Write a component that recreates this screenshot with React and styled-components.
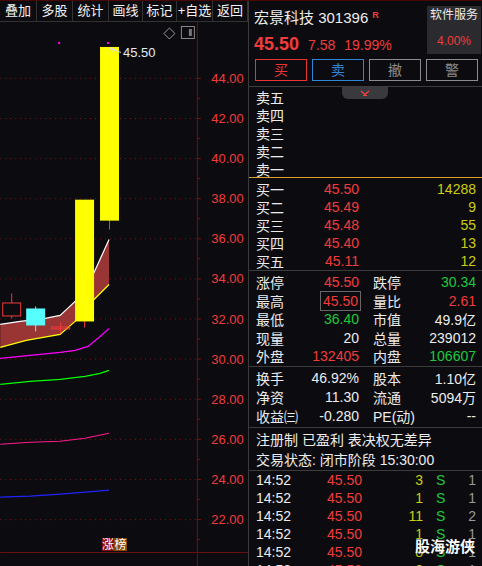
import React from "react";
import styled, { createGlobalStyle } from "styled-components";

const RED = "#f23b3b";
const GREEN = "#1ec83c";
const YELLOW = "#cccc10";
const GRID = "#7a1414";

const GlobalStyle = createGlobalStyle`
  html, body {
    margin: 0;
    padding: 0;
    background: #0c0c10;
  }
  body {
    font-family: "Liberation Sans", "Noto Sans CJK SC", sans-serif;
  }
`;

const Screen = styled.div`
  width: 482px;
  height: 566px;
  overflow: hidden;
  box-sizing: border-box;
  border-top: 1px solid #4a0606;
  display: grid;
  grid-template-columns: 248px 1px 233px;
  background: #0c0c10;
  color: #ececec;
`;

const ChartColumn = styled.div`
  display: flex;
  flex-direction: column;
  min-height: 0;
`;

const Toolbar = styled.div`
  display: flex;
  height: 20px;
  border-bottom: 1px solid #333;
`;

const ToolButton = styled.div`
  width: ${(p) => p.$w}px;
  box-sizing: border-box;
  border-right: 1px solid #333;
  font-size: 13px;
  line-height: 20px;
  text-align: center;
  white-space: nowrap;
  color: #f2f2f2;
`;

const Chart = styled.svg`
  display: block;
  flex: 1;
`;

const Divider = styled.div`
  background: #3a3a3a;
`;

const Panel = styled.div`
  position: relative;
  display: flex;
  flex-direction: column;
  font-size: 14px;
  min-height: 0;
`;

const Header = styled.div`
  display: flex;
  height: 55px;
  padding-left: 5px;
`;

const TitleBlock = styled.div`
  display: flex;
  flex-direction: column;
  padding-top: 5px;
`;

const Title = styled.div`
  font-size: 15px;
  line-height: 18px;
  white-space: nowrap;
  sup {
    color: ${RED};
    font-size: 9px;
    font-weight: bold;
    margin-left: 4px;
    vertical-align: 5px;
  }
`;

const PriceLine = styled.div`
  display: flex;
  align-items: baseline;
  gap: 9px;
  margin-top: 6px;
  line-height: 22px;
  color: ${RED};
`;

const BigPrice = styled.span`
  font-size: 18px;
  font-weight: bold;
`;

const SectorBox = styled.div`
  margin: 5px 1px 0 auto;
  width: 54px;
  height: 48px;
  box-sizing: border-box;
  padding: 2px 0 6px;
  background: #2b2b2f;
  display: flex;
  flex-direction: column;
  justify-content: space-between;
  align-items: center;
  font-size: 12px;
  line-height: 14px;
  span:last-child {
    color: ${RED};
  }
`;

const ButtonRow = styled.div`
  display: flex;
  gap: 5px;
  padding: 3px 0 5px 6px;
  border-bottom: 1px solid #3c3c3c;
`;

const TradeButton = styled.div`
  width: 52px;
  height: 22px;
  box-sizing: border-box;
  border: 1px solid ${(p) => p.$color};
  color: ${(p) => p.$color};
  text-align: center;
  line-height: 20px;
  font-size: 14px;
`;

const Book = styled.div`
  position: relative;
  display: flex;
  flex-direction: column;
  padding: ${(p) => p.$pad || "0"};
  border-bottom: 1px solid ${(p) => p.$line || "#3c3c3c"};
`;

const Tab = styled.div`
  position: absolute;
  top: 0;
  left: 93px;
  width: 46px;
  height: 12px;
  background: #3a3a3e;
  border-radius: 0 0 6px 6px;
  display: flex;
  justify-content: center;
  align-items: center;
`;

const Row = styled.div`
  display: grid;
  grid-template-columns: 103px 103px;
  column-gap: 14px;
  padding-left: 7px;
  height: ${(p) => p.$h || 18}px;
  align-items: center;
  white-space: nowrap;
`;

const Half = styled.div`
  display: flex;
  justify-content: space-between;
  align-items: center;
`;

const Value = styled.span`
  color: ${(p) => p.$color || "#ececec"};
  ${(p) => (p.$boxed ? "outline: 1px solid #666; outline-offset: 1px; padding: 0 1px;" : "")}
`;

const RightValue = styled(Value)`
  margin-left: auto;
`;

const Line = styled.div`
  padding-left: 7px;
  height: ${(p) => p.$h}px;
  line-height: ${(p) => p.$h}px;
  white-space: nowrap;
`;

const TradeRow = styled.div`
  display: grid;
  grid-template-columns: 66px 40px 61px 13px 20px 20px;
  padding-left: 7px;
  height: 18px;
  align-items: center;
  flex-shrink: 0;
`;

const Cell = styled.span`
  color: ${(p) => p.$color};
  text-align: ${(p) => p.$align || "left"};
`;

const Watermark = styled.div`
  position: absolute;
  left: 166px;
  top: 537px;
  font-size: 15px;
  line-height: 18px;
  font-weight: bold;
  color: #ffffff;
  text-shadow: 0 0 2px #000;
`;

const tools = [
  ["叠加", 37],
  ["多股", 36],
  ["统计", 36],
  ["画线", 34],
  ["标记", 34],
  ["+自选", 36],
  ["返回", 35],
];

const axis = ["44.00", "42.00", "40.00", "38.00", "36.00", "34.00", "32.00", "30.00", "28.00", "26.00", "24.00", "22.00"];
const gy = (i) => 77 + i * 40.18;

const buys = [
  ["买一", "45.50", "14288"],
  ["买二", "45.49", "9"],
  ["买三", "45.48", "55"],
  ["买四", "45.40", "13"],
  ["买五", "45.11", "12"],
];

const stats = [
  ["涨停", "45.50", RED, "跌停", "30.34", GREEN],
  ["最高", "45.50", RED, "量比", "2.61", RED, true],
  ["最低", "36.40", GREEN, "市值", "49.9亿"],
  ["现量", "20", null, "总量", "239012"],
  ["外盘", "132405", RED, "内盘", "106607", GREEN],
];

const stats2 = [
  ["换手", "46.92%", "股本", "1.10亿"],
  ["净资", "11.30", "流通", "5094万"],
  ["收益㈢", "-0.280", "PE(动)", "--"],
];

const trades = [
  ["3", "1"],
  ["1", "1"],
  ["11", "2"],
  ["1", "1"],
  ["8", "1"],
  ["2", "1"],
];

function KChart() {
  return (
    <Chart width="248" height="545" viewBox="0 21 248 545">
      {axis.map((label, i) => (
        <g key={label}>
          <line x1="0" x2="196" y1={gy(i) + 0.5} y2={gy(i) + 0.5} stroke={GRID} strokeDasharray="1 4" />
          <line x1="197" x2="201" y1={gy(i) + 0.5} y2={gy(i) + 0.5} stroke={GRID} />
          <line x1="197" x2="200" y1={gy(i) + 20.5} y2={gy(i) + 20.5} stroke={GRID} />
          <text x="244" y={gy(i) + 5} fill={RED} fontSize="13" textAnchor="end" fontFamily="Liberation Sans, sans-serif">
            {label}
          </text>
        </g>
      ))}
      <line x1="0" x2="200" y1="57.5" y2="57.5" stroke="none" />
      <line x1="197.5" x2="197.5" y1="21" y2="566" stroke="#6b1010" />
      <line x1="0" x2="248" y1="552.5" y2="552.5" stroke="#6b1010" />

      <polygon
        points="0,324 20,321 45,318 60,315 75,301 94,272 109,239 109,284 94,299 75,321 60,334 26,340 0,347"
        fill="#9a3535"
      />
      <polyline points="0,324 20,321 45,318 60,315 75,301 94,272 109,239" fill="none" stroke="#ffffff" strokeWidth="1.2" />
      <polyline points="0,347 26,340 60,334 75,321 94,299 109,284" fill="none" stroke="#ffff00" strokeWidth="1.2" />

      <polyline points="0,358 30,355 60,352 75,350 88,346 100,336 109,328" fill="none" stroke="#ff00ff" strokeWidth="1.2" />
      <polyline points="0,384 30,381 60,379 85,376 100,373 109,370" fill="none" stroke="#00ff00" strokeWidth="1.2" />
      <polyline points="0,444 30,442 60,441 85,438 109,433" fill="none" stroke="#ff1a8c" strokeWidth="1.2" />
      <polyline points="0,497 30,496 60,494 85,492 109,490" fill="none" stroke="#2222ff" strokeWidth="1.2" />

      <line x1="11.5" x2="11.5" y1="293" y2="318" stroke={RED} />
      <rect x="2.5" y="302.5" width="18" height="13" fill="#0c0c10" stroke={RED} />
      <line x1="35.5" x2="35.5" y1="306" y2="331" stroke="#55ffff" />
      <rect x="26" y="308" width="19" height="17" fill="#55ffff" />
      <line x1="60.5" x2="60.5" y1="322" y2="333" stroke={RED} />
      <rect x="51.5" y="326.5" width="18" height="2" fill="none" stroke={RED} />
      <line x1="84.5" x2="84.5" y1="318" y2="327" stroke={RED} />
      <rect x="75" y="199" width="19" height="122" fill="#ffff00" />
      <line x1="109.5" x2="109.5" y1="218" y2="229" stroke={RED} />
      <rect x="100" y="46" width="19" height="174" fill="#ffff00" />

      <rect x="58" y="41" width="2" height="2" fill="#ff00ff" />
      <rect x="107" y="41" width="2" height="2" fill="#ff00ff" />
      <path d="M110,47 L115,48.5 M110,47 L112.5,51 M111,48 L121,51.5" stroke="#dddddd" fill="none" />
      <text x="123" y="56.5" fill="#e4ecf4" fontSize="13" fontFamily="Liberation Sans, sans-serif">
        45.50
      </text>

      <polygon points="169.5,27 175,32.5 169.5,38 164,32.5" fill="none" stroke="#999" />
      <rect x="181.5" y="25.5" width="13" height="12" fill="none" stroke="#888" />
      <rect x="189" y="28" width="3" height="7" fill="#777" />

      <rect x="102" y="538" width="12" height="13" fill="#8a0c0c" />
      <rect x="114" y="538" width="13" height="13" fill="#8a4800" />
      <text x="102" y="549" fill="#ffffff" fontSize="12" fontFamily="Noto Sans CJK SC, sans-serif">
        涨
      </text>
      <text x="114.5" y="549" fill="#ffffff" fontSize="12" fontFamily="Noto Sans CJK SC, sans-serif">
        榜
      </text>
    </Chart>
  );
}

export default function App() {
  return (
    <>
      <GlobalStyle />
      <Screen>
        <ChartColumn>
          <Toolbar>
            {tools.map(([t, w]) => (
              <ToolButton key={t} $w={w}>
                {t}
              </ToolButton>
            ))}
          </Toolbar>
          <KChart />
        </ChartColumn>
        <Divider />
        <Panel>
          <Header>
            <TitleBlock>
              <Title>
                宏景科技 301396<sup>R</sup>
              </Title>
              <PriceLine>
                <BigPrice>45.50</BigPrice>
                <span>7.58</span>
                <span>19.99%</span>
              </PriceLine>
            </TitleBlock>
            <SectorBox>
              <span>软件服务</span>
              <span>4.00%</span>
            </SectorBox>
          </Header>

          <ButtonRow>
            <TradeButton $color="#e83434">买</TradeButton>
            <TradeButton $color="#2f86d6">卖</TradeButton>
            <TradeButton $color="#8c8c8c">撤</TradeButton>
            <TradeButton $color="#8c8c8c">警</TradeButton>
          </ButtonRow>

          <Book $line="#e0a030">
            <Tab>
              <svg width="10" height="7" viewBox="0 0 10 7">
                <path d="M1,1 L5,4.5 L9,1 M3,5.5 L7,5.5" stroke="#ff4040" fill="none" strokeWidth="1.2" />
              </svg>
            </Tab>
            {["卖五", "卖四", "卖三", "卖二", "卖一"].map((t) => (
              <Row key={t}>
                <Half>
                  <span>{t}</span>
                </Half>
              </Row>
            ))}
          </Book>

          <Book $pad="1px 0">
            {buys.map(([t, p, v]) => (
              <Row key={t}>
                <Half>
                  <span>{t}</span>
                  <Value $color={RED}>{p}</Value>
                </Half>
                <Half>
                  <RightValue $color={YELLOW}>{v}</RightValue>
                </Half>
              </Row>
            ))}
          </Book>

          <Book $pad="1px 0">
            {stats.map(([a, av, ac, b, bv, bc, boxed]) => (
              <Row key={a} $h={18.6}>
                <Half>
                  <span>{a}</span>
                  <Value $color={ac} $boxed={boxed}>
                    {av}
                  </Value>
                </Half>
                <Half>
                  <span>{b}</span>
                  <Value $color={bc}>{bv}</Value>
                </Half>
              </Row>
            ))}
          </Book>

          <Book $pad="1px 0 2px">
            {stats2.map(([a, av, b, bv]) => (
              <Row key={a} $h={19}>
                <Half>
                  <span>{a}</span>
                  <Value>{av}</Value>
                </Half>
                <Half>
                  <span>{b}</span>
                  <Value>{bv}</Value>
                </Half>
              </Row>
            ))}
          </Book>

          <Book $pad="3px 0 0">
            <Line $h={19}>注册制 已盈利 表决权无差异</Line>
            <Line $h={20}>交易状态: 闭市阶段 15:30:00</Line>
          </Book>

          {trades.map(([v, n], i) => (
            <TradeRow key={i}>
              <Cell>14:52</Cell>
              <Cell $color={RED} $align="right">
                45.50
              </Cell>
              <Cell $color={YELLOW} $align="right">
                {v}
              </Cell>
              <span />
              <Cell $color={GREEN}>S</Cell>
              <Cell $color="#9a9a9a" $align="right">
                {n}
              </Cell>
            </TradeRow>
          ))}

          <Watermark>股海游侠</Watermark>
        </Panel>
      </Screen>
    </>
  );
}
